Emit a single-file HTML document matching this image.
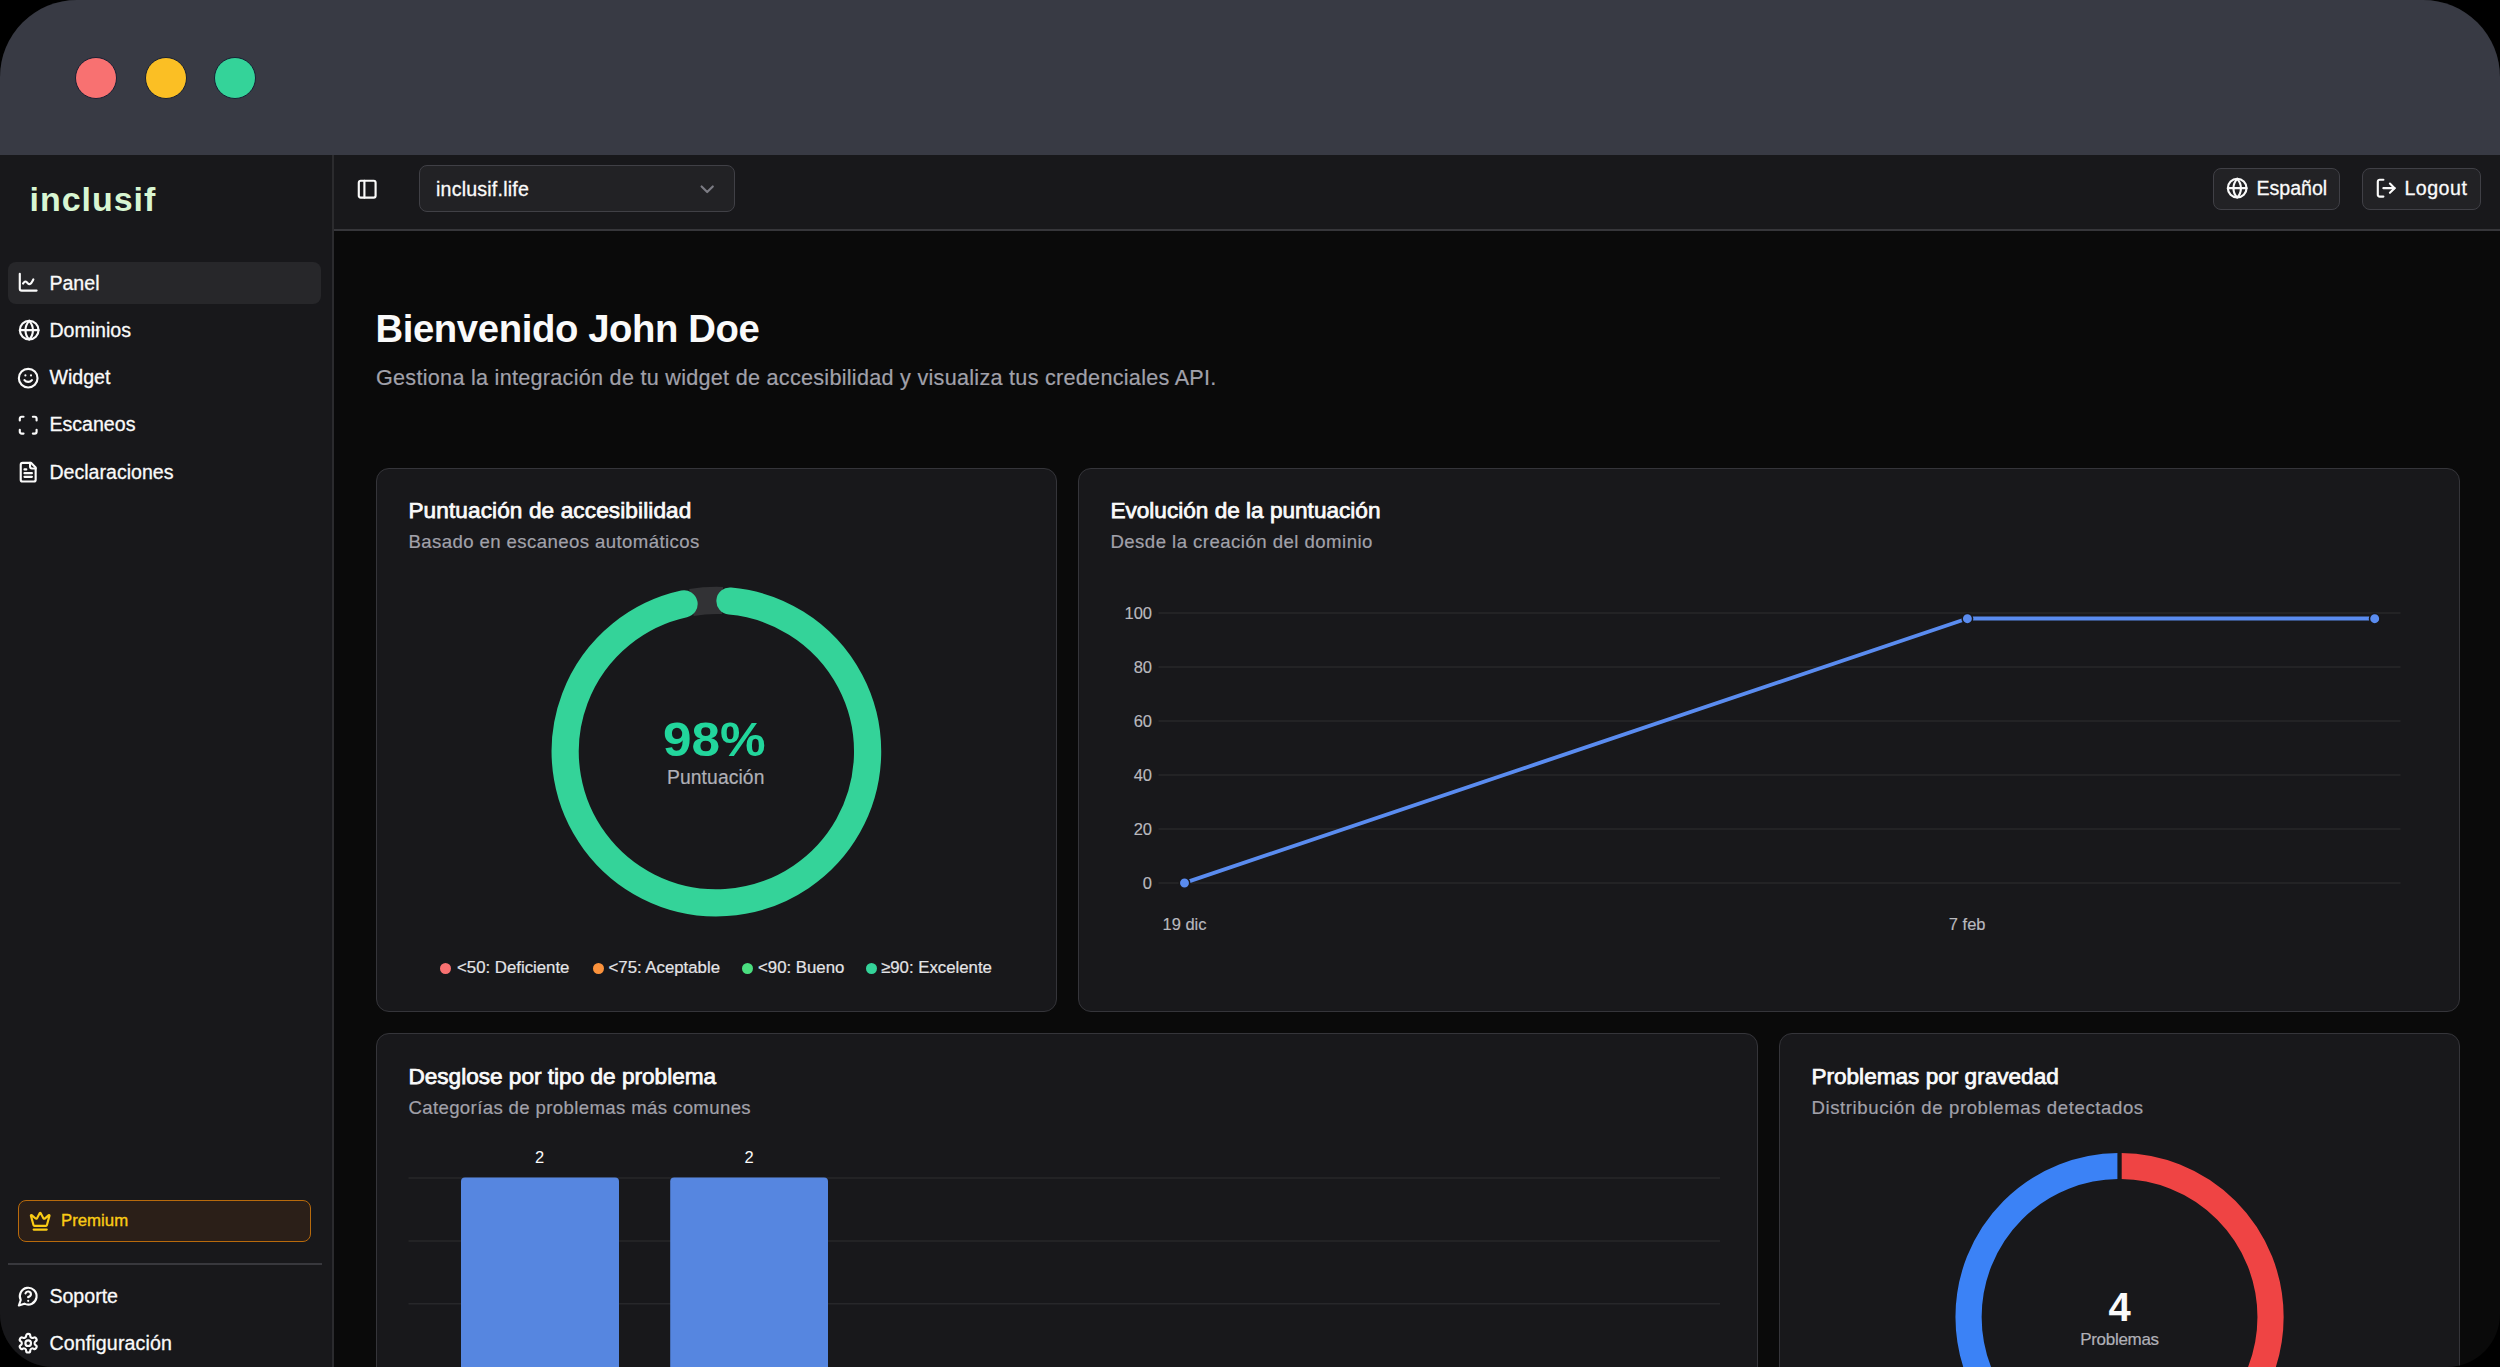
<!DOCTYPE html>
<html><head><meta charset="utf-8">
<style>
html,body{margin:0;padding:0;width:2500px;height:1367px;background:#000;overflow:hidden;font-family:"Liberation Sans",sans-serif;}
.win{position:absolute;left:0;top:0;width:2500px;height:1367px;border-radius:77px 77px 53px 53px;overflow:hidden;background:#0a0a0a;}
.titlebar{position:absolute;left:0;top:0;width:2500px;height:155px;background:#383a44;}
.dot{position:absolute;top:56.6px;width:42px;height:42px;border-radius:50%;box-sizing:border-box;border:1.2px solid #172033;}
.sidebar{position:absolute;left:0;top:155px;width:332px;height:1212px;background:#18181b;border-right:2px solid #2b2b2e;}
.header{position:absolute;left:334px;top:155px;width:2166px;height:74px;background:#18181b;border-bottom:2px solid #36363a;}
.t{position:absolute;line-height:1;white-space:nowrap;}
svg.i{position:absolute;width:22.4px;height:22.4px;fill:none;stroke:currentColor;stroke-width:2.3;stroke-linecap:round;stroke-linejoin:round;color:#fafafa;}
.nav{color:#fafafa;font-size:19.6px;-webkit-text-stroke-width:0.3px;}
.card{position:absolute;background:#18181b;border:1px solid #35353a;border-radius:13px;box-sizing:border-box;}
.ct{color:#fafafa;font-size:22.6px;-webkit-text-stroke-width:0.75px;}
.cs{color:#a1a1aa;font-size:18.6px;-webkit-text-stroke-width:0.2px;}
.btn{position:absolute;box-sizing:border-box;border:1px solid #404046;background:#222225;border-radius:8px;}
.ax{color:#b9b9bf;font-size:16.5px;-webkit-text-stroke-width:0.15px;}
.lg{color:#e4e4e7;font-size:16.8px;-webkit-text-stroke-width:0.2px;}
.ld{position:absolute;width:11px;height:11px;border-radius:50%;}
</style></head><body>
<div class="win">
  <div class="titlebar">
    <div class="dot" style="left:75.3px;background:#f87171"></div>
    <div class="dot" style="left:144.5px;background:#fbbf24"></div>
    <div class="dot" style="left:214px;background:#34d399"></div>
  </div>

  <div class="sidebar"></div>
  <div class="header"></div>

  <!-- SIDEBAR CONTENT -->
  <div class="t" style="left:29.5px;top:182.2px;font-size:34px;font-weight:bold;color:#d8f6d2;letter-spacing:0.97px;">inclusif</div>

  <div style="position:absolute;left:8px;top:262px;width:313px;height:42px;border-radius:8px;background:#27272a;"></div>
  <svg class="i" style="left:17.3px;top:271.3px" viewBox="0 0 24 24"><path d="M3 3v16a2 2 0 0 0 2 2h16"/><path d="M6.5 13.5c1-2 2.5-3 4-1.5s2 2.5 3.5 2c1.5-.5 2.5-3 3.5-5"/></svg>
  <div class="t nav" style="left:49.4px;top:273.7px;">Panel</div>
  <svg class="i" style="left:17.5px;top:319px" viewBox="0 0 24 24"><circle cx="12" cy="12" r="10"/><path d="M12 2a14.5 14.5 0 0 0 0 20 14.5 14.5 0 0 0 0-20"/><path d="M2 12h20"/></svg>
  <div class="t nav" style="left:49.4px;top:321.1px;">Dominios</div>
  <svg class="i" style="left:17.3px;top:366.6px" viewBox="0 0 24 24"><circle cx="12" cy="12" r="10"/><path d="M8 14s1.5 2 4 2 4-2 4-2"/><line x1="9" x2="9.01" y1="9" y2="9"/><line x1="15" x2="15.01" y1="9" y2="9"/></svg>
  <div class="t nav" style="left:49.4px;top:368.2px;">Widget</div>
  <svg class="i" style="left:17.3px;top:414.1px" viewBox="0 0 24 24"><path d="M3 7V5a2 2 0 0 1 2-2h2"/><path d="M17 3h2a2 2 0 0 1 2 2v2"/><path d="M21 17v2a2 2 0 0 1-2 2h-2"/><path d="M7 21H5a2 2 0 0 1-2-2v-2"/></svg>
  <div class="t nav" style="left:49.4px;top:415.4px;">Escaneos</div>
  <svg class="i" style="left:17.3px;top:461.4px" viewBox="0 0 24 24"><path d="M15 2H6a2 2 0 0 0-2 2v16a2 2 0 0 0 2 2h12a2 2 0 0 0 2-2V7Z"/><path d="M14 2v4a2 2 0 0 0 2 2h4"/><path d="M10 9H8"/><path d="M16 13H8"/><path d="M16 17H8"/></svg>
  <div class="t nav" style="left:49.4px;top:462.9px;">Declaraciones</div>

  <!-- premium -->
  <div style="position:absolute;left:18px;top:1200px;width:293px;height:42px;box-sizing:border-box;border:1px solid #b86a0c;background:#2b1f18;border-radius:8px;"></div>
  <svg class="i" style="left:29.1px;top:1209.7px;color:#facc15" viewBox="0 0 24 24"><path d="M11.562 3.266a.5.5 0 0 1 .876 0L15.39 8.87a1 1 0 0 0 1.516.294L21.183 5.5a.5.5 0 0 1 .798.519l-2.834 10.246a1 1 0 0 1-.956.734H5.81a1 1 0 0 1-.957-.734L2.02 6.02a.5.5 0 0 1 .798-.519l4.276 3.664a1 1 0 0 0 1.516-.294z"/><path d="M5 21h14"/></svg>
  <div class="t" style="left:61px;top:1212.8px;font-size:16.8px;color:#facc15;-webkit-text-stroke-width:0.35px;">Premium</div>
  <div style="position:absolute;left:8px;top:1263px;width:314px;height:1.5px;background:#38383d;"></div>
  <svg class="i" style="left:17.1px;top:1284.7px" viewBox="0 0 24 24"><path d="M7.9 20A9 9 0 1 0 4 16.1L2 22Z"/><path d="M9.09 9a3 3 0 0 1 5.83 1c0 2-3 3-3 3"/><path d="M12 17h.01"/></svg>
  <div class="t nav" style="left:49.4px;top:1286.6px;">Soporte</div>
  <svg class="i" style="left:17px;top:1332.2px" viewBox="0 0 24 24"><path d="M12.22 2h-.44a2 2 0 0 0-2 2v.18a2 2 0 0 1-1 1.73l-.43.25a2 2 0 0 1-2 0l-.15-.08a2 2 0 0 0-2.73.73l-.22.38a2 2 0 0 0 .73 2.73l.15.1a2 2 0 0 1 1 1.72v.51a2 2 0 0 1-1 1.74l-.15.09a2 2 0 0 0-.73 2.730l.22.38a2 2 0 0 0 2.73.73l.15-.08a2 2 0 0 1 2 0l.43.25a2 2 0 0 1 1 1.73V20a2 2 0 0 0 2 2h.44a2 2 0 0 0 2-2v-.18a2 2 0 0 1 1-1.73l.43-.25a2 2 0 0 1 2 0l.15.08a2 2 0 0 0 2.73-.73l.22-.39a2 2 0 0 0-.73-2.73l-.15-.08a2 2 0 0 1-1-1.74v-.5a2 2 0 0 1 1-1.74l.15-.09a2 2 0 0 0 .73-2.73l-.22-.38a2 2 0 0 0-2.73-.73l-.15.08a2 2 0 0 1-2 0l-.43-.25a2 2 0 0 1-1-1.73V4a2 2 0 0 0-2-2z"/><circle cx="12" cy="12" r="3"/></svg>
  <div class="t nav" style="left:49.4px;top:1334.2px;letter-spacing:0.14px;">Configuración</div>

  <!-- HEADER CONTENT -->
  <svg class="i" style="left:356.3px;top:178px" viewBox="0 0 24 24"><rect width="18" height="18" x="3" y="3" rx="2"/><path d="M9 3v18"/></svg>
  <div class="btn" style="left:419px;top:165px;width:316px;height:47px;"></div>
  <div class="t" style="left:436px;top:179.7px;font-size:19.6px;color:#fafafa;letter-spacing:0.2px;-webkit-text-stroke-width:0.3px;">inclusif.life</div>
  <svg class="i" style="left:695.9px;top:177.5px;color:#7c7c84" viewBox="0 0 24 24"><path d="m6 9 6 6 6-6"/></svg>
  <div class="btn" style="left:2213px;top:168px;width:127px;height:42px;"></div>
  <svg class="i" style="left:2226.3px;top:177.2px" viewBox="0 0 24 24"><circle cx="12" cy="12" r="10"/><path d="M12 2a14.5 14.5 0 0 0 0 20 14.5 14.5 0 0 0 0-20"/><path d="M2 12h20"/></svg>
  <div class="t" style="left:2256.4px;top:178.7px;font-size:19.6px;color:#fafafa;-webkit-text-stroke-width:0.3px;">Español</div>
  <div class="btn" style="left:2362px;top:168px;width:119px;height:42px;"></div>
  <svg class="i" style="left:2375.3px;top:177.2px" viewBox="0 0 24 24"><path d="M9 21H5a2 2 0 0 1-2-2V5a2 2 0 0 1 2-2h4"/><polyline points="16 17 21 12 16 7"/><line x1="21" x2="9" y1="12" y2="12"/></svg>
  <div class="t" style="left:2404.4px;top:178.7px;font-size:19.6px;color:#fafafa;letter-spacing:0.5px;-webkit-text-stroke-width:0.3px;">Logout</div>

  <!-- MAIN -->
  <div class="t" style="left:375.4px;top:309.6px;font-size:38.3px;color:#fafafa;letter-spacing:-0.39px;font-weight:bold;">Bienvenido John Doe</div>
  <div class="t" style="left:376px;top:367.4px;font-size:21.6px;color:#a1a1aa;letter-spacing:0.28px;-webkit-text-stroke-width:0.2px;">Gestiona la integración de tu widget de accesibilidad y visualiza tus credenciales API.</div>

  <div class="card" style="left:376px;top:468px;width:681px;height:544px;"></div>
  <div class="card" style="left:1078px;top:468px;width:1382px;height:544px;"></div>
  <div class="card" style="left:376px;top:1033px;width:1382px;height:400px;"></div>
  <div class="card" style="left:1779px;top:1033px;width:681px;height:400px;"></div>

  <div class="t ct" style="left:408.4px;top:499.9px;letter-spacing:0.11px;">Puntuación de accesibilidad</div>
  <div class="t cs" style="left:408.4px;top:533.2px;letter-spacing:0.41px;">Basado en escaneos automáticos</div>
  <div class="t ct" style="left:1110.4px;top:499.9px;letter-spacing:0px;">Evolución de la puntuación</div>
  <div class="t cs" style="left:1110.4px;top:533.2px;letter-spacing:0.46px;">Desde la creación del dominio</div>
  <div class="t ct" style="left:408.4px;top:1065.6px;letter-spacing:0px;">Desglose por tipo de problema</div>
  <div class="t cs" style="left:408.4px;top:1099px;letter-spacing:0.37px;">Categorías de problemas más comunes</div>
  <div class="t ct" style="left:1811.4px;top:1065.6px;letter-spacing:0px;">Problemas por gravedad</div>
  <div class="t cs" style="left:1811.4px;top:1099px;letter-spacing:0.59px;">Distribución de problemas detectados</div>

  <!-- CHARTS SVG -->
  <svg style="position:absolute;left:0;top:0" width="2500" height="1367" viewBox="0 0 2500 1367">
    <defs>
      <clipPath id="cr"><rect x="2121.7" y="1100" width="300" height="300"/></clipPath>
      <clipPath id="cb"><rect x="1817.4" y="1100" width="300" height="300"/></clipPath>
    </defs>
    <!-- donut 1 -->
    <path d="M691.44 602.47 A151.2 151.2 0 0 1 722.47 600.52" fill="none" stroke="#323235" stroke-width="27.2"/>
    <path d="M729.97 601.01 A151.2 151.2 0 1 1 684.06 603.9" fill="none" stroke="#34d399" stroke-width="27.2" stroke-linecap="round"/>
    <!-- line chart grid -->
    <g stroke="#27272a" stroke-width="1.5">
      <line x1="1158.5" x2="2400.5" y1="613" y2="613"/>
      <line x1="1158.5" x2="2400.5" y1="667" y2="667"/>
      <line x1="1158.5" x2="2400.5" y1="721" y2="721"/>
      <line x1="1158.5" x2="2400.5" y1="775" y2="775"/>
      <line x1="1158.5" x2="2400.5" y1="829" y2="829"/>
      <line x1="1158.5" x2="2400.5" y1="883" y2="883"/>
    </g>
    <polyline points="1184.5,882.8 1967.4,618.5 2374.7,618.5" fill="none" stroke="#5a8cf0" stroke-width="3.9" stroke-linejoin="round"/>
    <g fill="#5a8cf0" stroke="#18181b" stroke-width="1.5">
      <circle cx="1184.5" cy="883" r="5.2"/>
      <circle cx="1967.4" cy="618.7" r="5.2"/>
      <circle cx="2374.7" cy="618.7" r="5.2"/>
    </g>
    <!-- bar chart grid -->
    <g stroke="#27272a" stroke-width="1.5">
      <line x1="408.5" x2="1720" y1="1178" y2="1178"/>
      <line x1="408.5" x2="1720" y1="1241" y2="1241"/>
      <line x1="408.5" x2="1720" y1="1303.7" y2="1303.7"/>
    </g>
    <path d="M461 1400 V1181.4 a4 4 0 0 1 4 -4 H615 a4 4 0 0 1 4 4 V1400Z" fill="#5686e0"/>
    <path d="M670.2 1400 V1181.4 a4 4 0 0 1 4 -4 H824 a4 4 0 0 1 4 4 V1400Z" fill="#5686e0"/>
    <!-- donut 2 -->
    <circle cx="2119.55" cy="1317" r="151" fill="none" stroke="#ef4444" stroke-width="26.2" clip-path="url(#cr)"/>
    <circle cx="2119.55" cy="1317" r="151" fill="none" stroke="#3b82f6" stroke-width="26.2" clip-path="url(#cb)"/>
  </svg>

  <!-- donut 1 text -->
  <div class="t" style="left:663px;top:715.5px;font-size:47.2px;font-weight:bold;color:#22d69c;transform:scaleX(1.087);transform-origin:0 0;">98%</div>
  <div class="t" style="left:667px;top:768.3px;font-size:19.3px;color:#b0b0b7;letter-spacing:0.1px;-webkit-text-stroke-width:0.2px;">Puntuación</div>
  <!-- legend -->
  <div class="ld" style="left:440.1px;top:962.5px;background:#f87171"></div>
  <div class="t lg" style="left:457px;top:960.2px;">&lt;50: Deficiente</div>
  <div class="ld" style="left:592.5px;top:962.5px;background:#fb923c"></div>
  <div class="t lg" style="left:608.5px;top:960.2px;">&lt;75: Aceptable</div>
  <div class="ld" style="left:742.2px;top:962.5px;background:#4ade80"></div>
  <div class="t lg" style="left:758px;top:960.2px;">&lt;90: Bueno</div>
  <div class="ld" style="left:865.5px;top:962.5px;background:#34d399"></div>
  <div class="t lg" style="left:881px;top:960.2px;">≥90: Excelente</div>

  <!-- line chart axis labels -->
  <div class="t ax" style="left:1052px;top:605px;width:100px;text-align:right;">100</div>
  <div class="t ax" style="left:1052px;top:659px;width:100px;text-align:right;">80</div>
  <div class="t ax" style="left:1052px;top:713px;width:100px;text-align:right;">60</div>
  <div class="t ax" style="left:1052px;top:767px;width:100px;text-align:right;">40</div>
  <div class="t ax" style="left:1052px;top:821px;width:100px;text-align:right;">20</div>
  <div class="t ax" style="left:1052px;top:875px;width:100px;text-align:right;">0</div>
  <div class="t ax" style="left:1134.5px;top:916px;width:100px;text-align:center;">19 dic</div>
  <div class="t ax" style="left:1917.2px;top:916px;width:100px;text-align:center;">7 feb</div>

  <!-- bar labels -->
  <div class="t" style="left:489.7px;top:1149.4px;width:100px;text-align:center;font-size:16.5px;color:#fafafa;">2</div>
  <div class="t" style="left:699px;top:1149.4px;width:100px;text-align:center;font-size:16.5px;color:#fafafa;">2</div>

  <!-- donut 2 text -->
  <div class="t" style="left:2069.5px;top:1287px;width:100px;text-align:center;font-size:40px;font-weight:bold;color:#fafafa;">4</div>
  <div class="t" style="left:2069.5px;top:1331.4px;width:100px;text-align:center;font-size:17px;color:#b0b0b7;letter-spacing:-0.3px;-webkit-text-stroke-width:0.2px;">Problemas</div>
</div>
</body></html>
